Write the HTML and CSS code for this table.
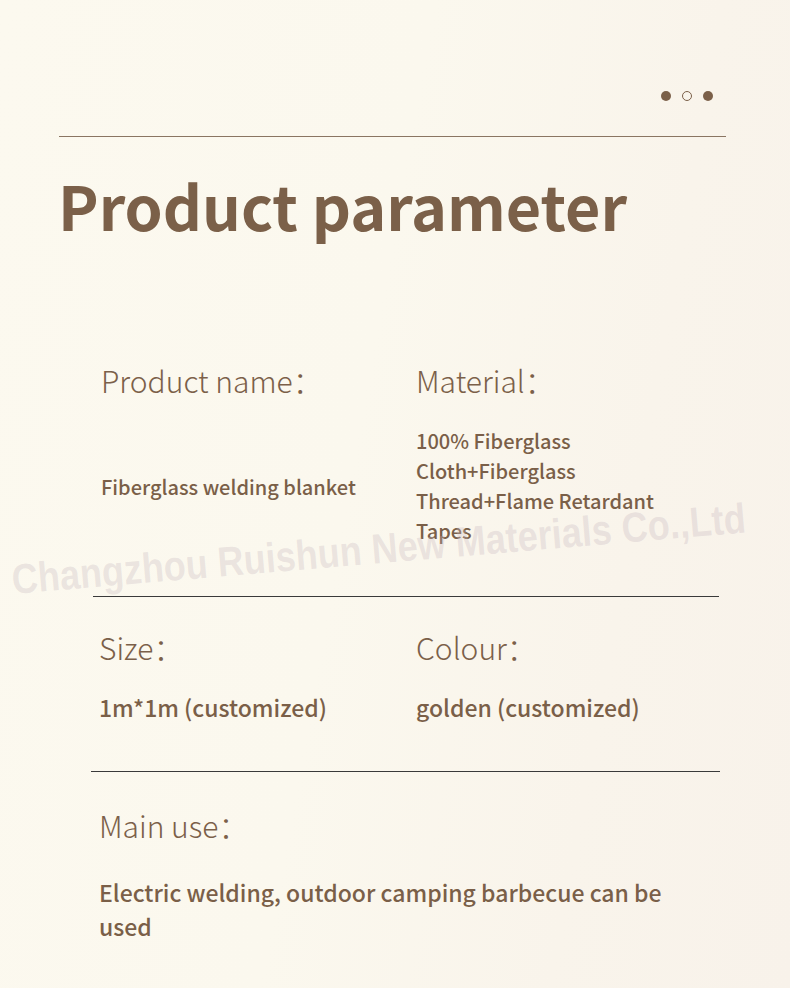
FILE: index.html
```html
<!DOCTYPE html>
<html>
<head>
<meta charset="utf-8">
<link rel="stylesheet" href="styles.css">
</head>
<body>
<div class="page">
  <div class="dots"><span class="dot"></span><span class="dot ring"></span><span class="dot"></span></div>
  <div class="topline"></div>
  <h1 class="title">Product parameter</h1>

  <div class="row row1">
    <div class="cell">
      <div class="label">Product name：</div>
      <div class="value v-name">Fiberglass welding blanket</div>
    </div>
    <div class="cell">
      <div class="label">Material：</div>
      <div class="value v-mat">100% Fiberglass<br>Cloth+Fiberglass<br>Thread+Flame Retardant<br>Tapes</div>
    </div>
  </div>
  <div class="divider d1"></div>

  <div class="row row2">
    <div class="cell">
      <div class="label">Size：</div>
      <div class="value big">1m*1m (customized)</div>
    </div>
    <div class="cell">
      <div class="label">Colour：</div>
      <div class="value big">golden (customized)</div>
    </div>
  </div>
  <div class="divider d2"></div>

  <div class="row3">
    <div class="label">Main use：</div>
    <div class="value use">Electric welding, outdoor camping barbecue can be used</div>
  </div>

  <div class="watermark">Changzhou Ruishun New Materials Co.,Ltd</div>
</div>
</body>
</html>
```

FILE: styles.css
```css
html, body {
  margin: 0;
  padding: 0;
}
body {
  width: 790px;
  height: 988px;
  overflow: hidden;
  font-family: "Noto Sans CJK SC", "Noto Sans", sans-serif;
  color: #7a5f48;
}
.page {
  position: relative;
  width: 790px;
  height: 988px;
  box-sizing: border-box;
  padding-top: 91px;
  background: linear-gradient(100deg, #fcf9ef 0%, #fbf8ee 45%, #f9f4eb 75%, #f8f2ea 100%);
}
.dots {
  display: flex;
  justify-content: flex-end;
  gap: 11px;
  padding-right: 77px;
  height: 12px;
}
.dot {
  width: 10px;
  height: 10px;
  border-radius: 50%;
  background: #7b6049;
  box-sizing: border-box;
}
.dot.ring {
  background: transparent;
  border: 1.5px solid #7b6049;
}
.topline {
  margin: 33px 64px 0 59px;
  height: 1px;
  background: #8a7562;
}
.title {
  margin: 18px 0 0 58px;
  font-size: 61px;
  font-weight: 700;
  line-height: 100px;
  color: #7b6049;
  letter-spacing: 0;
}
.row {
  display: grid;
  grid-template-columns: 315px 1fr;
  padding-left: 101px;
}
.row1 {
  margin-top: 105px;
}
.label {
  font-size: 30px;
  font-weight: 300;
  line-height: 40px;
  color: #7b6049;
}
.value {
  font-size: 20px;
  font-weight: 500;
  line-height: 30px;
  color: #7a5f48;
}
.row1 .cell {
  display: flex;
  flex-direction: column;
}
.v-name {
  margin-top: 72px;
}
.v-mat {
  margin-top: 26px;
}
.divider {
  height: 1px;
  background: #3a3a3a;
}
.d1 {
  margin: 50px 71px 0 93px;
}
.row2 {
  padding-left: 99px;
  grid-template-columns: 317px 1fr;
  margin-top: 30px;
}
.big {
  font-size: 23px;
  margin-top: 25px;
}
.d2 {
  margin: 49px 70px 0 91px;
}
.row3 {
  padding-left: 99px;
  margin-top: 33px;
  width: 580px;
}
.use {
  font-size: 23px;
  line-height: 34px;
  margin-top: 30px;
}
.watermark {
  position: absolute;
  left: 13px;
  top: 559px;
  font-family: "Liberation Sans", Arial, sans-serif;
  font-size: 42px;
  line-height: 1;
  font-weight: 700;
  color: rgba(200, 185, 192, 0.32);
  white-space: nowrap;
  transform: rotate(-4.8deg) scaleX(0.86);
  transform-origin: 0 36px;
}
```
